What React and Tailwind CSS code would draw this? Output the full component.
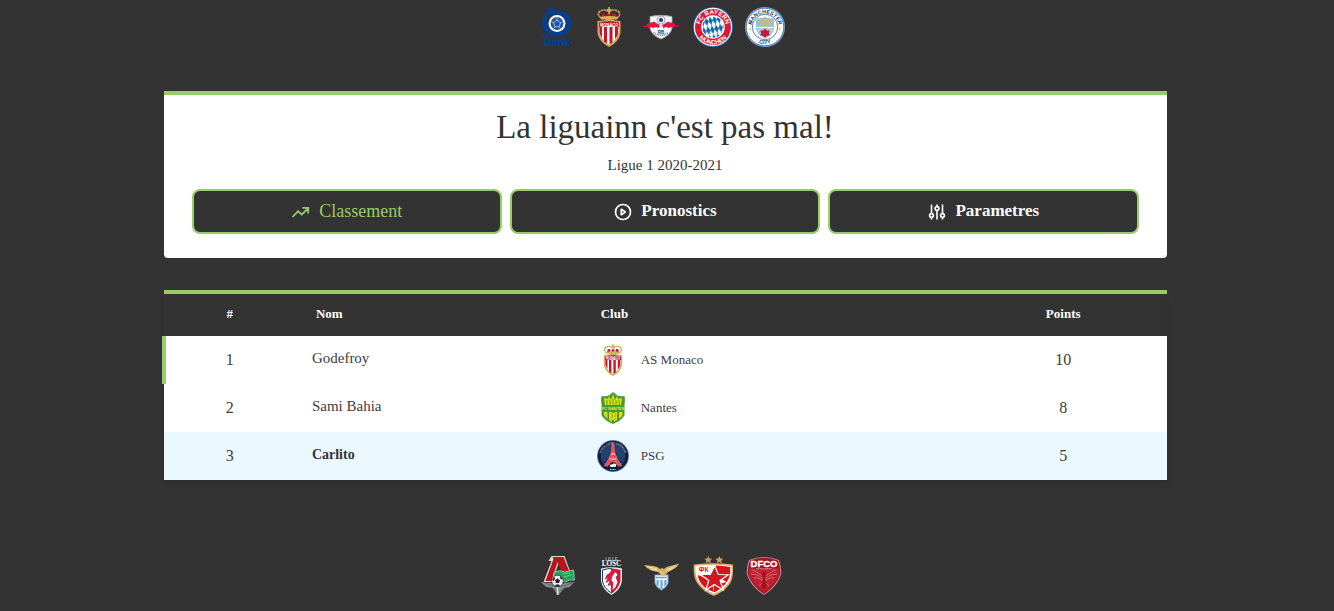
import React from "react";

const crestText = { fontFamily: '"Liberation Sans", Arial, sans-serif', fontWeight: 700 };

function Genk({ className }) {
  return (
    <svg viewBox="0 0 40 40" className={className} role="img" aria-label="Genk">
      <g fill="#063f8c">
        <path d="M10 1 L14 0 L18 4 C24 2 31 6 34.500 12 L27 23 C29 19 28 12 24 9 C20 6 15 7 13 10 Z" />
        <path d="M8 6 L13 4 C10 9 9 15 12 20 C15 25 21 26 26 23 L35 13 C35 20 31 27 25 29 C18 31 10 28 6 22 C4 17 5 11 8 6 Z" />
        <path d="M5 28.500 h6 v2 h-6z" />
      </g>
      <circle cx="20" cy="16.500" r="8.500" fill="#fff" />
      <circle cx="20" cy="16.500" r="6.500" fill="#24579d" />
      <path d="M20 13 l3.500 2.700 -1.400 4 h-4.200 L16.500 15.700z M20 10.500 v2.500 M23.500 15.700 l2.400 -1 M22 19.700 l1.500 2 M18 19.700 l-1.500 2 M16.500 15.700 l-2.400 -1" fill="none" stroke="#b9cbe2" strokeWidth=".8" />
      <text x="20" y="39" textAnchor="middle" fontSize="10.500" fill="#063f8c" stroke="#063f8c" strokeWidth=".6" style={crestText}>Genk</text>
    </svg>
  );
}

function Monaco({ className }) {
  return (
    <svg viewBox="0 0 40 40" className={className} role="img" aria-label="AS Monaco">
      <path d="M12 11 Q8 8 10 5 Q15 1 20 5 Q25 1 30 5 Q32 8 28 11" fill="none" stroke="#c99b45" strokeWidth="1.700" strokeDasharray="2.500 .5" />
      <path d="M19.300 0h1.600v2h1.600v1.400h-1.600V8h-1.600V3.400h-1.600V2h1.600z" fill="#d8b15d" />
      <path d="M13 7l3-1 1 4h-4zM27 7l-3-1-1 4h4zM18 7h4v3h-4z" fill="#c4142b" />
      <path d="M11 10 Q20 8 29 10 L28 12.500 H12Z" fill="#d8b15d" />
      <path d="M8.500 14 Q14 14 20 11.500 Q26 14 31.500 14 L31.500 26 Q30 35 20 40 Q10 35 8.500 26Z" fill="#d3ab58" />
      <path d="M10.500 16 H29.500 V26 Q28 33 20 37.500 Q12 33 10.500 26Z" fill="#fff" />
      <path d="M10.500 20h2.500v11q-2-3-2.500-5zM15 20h3v16.500l-3-2zM20.500 20h3v15.500l-3 1.800zM26 20h3v7q-1 3-3 5z" fill="#d20e2c" />
      <path d="M10 15.500 Q20 12.500 30 15.500 V20 Q20 18 10 20Z" fill="#bd1c32" />
      <text x="20" y="18.500" textAnchor="middle" fontSize="4" fill="#fff" style={crestText}>MONACO</text>
    </svg>
  );
}

function Leipzig({ className }) {
  return (
    <svg viewBox="0 0 40 40" className={className} role="img" aria-label="RB Leipzig">
      <path d="M9 9.500 Q20 7 31 9.500 L31 21 Q30 28 20 32 Q10 28 9 21Z" fill="#f4f5f7" stroke="#9aa5b1" strokeWidth=".8" />
      <circle cx="20" cy="13" r="4" fill="#fff" stroke="#788899" strokeWidth=".7" />
      <path d="M20 10.500l2.300 1.800-.9 2.600h-2.800l-.9-2.600z" fill="#30475d" />
      <path d="M0 18.500 L5 19 Q7 15 11 15.500 L13 14.500 L15 16 L19 18 L17.500 21 L15 20 L12 21 L9.500 20 L7 22 L7.500 20 L4 20Z" fill="#dd1742" />
      <path d="M40 18.500 L35 19 Q33 15 29 15.500 L27 14.500 L25 16 L21 18 L22.500 21 L25 20 L28 21 L30.500 20 L33 22 L32.500 20 L36 20Z" fill="#dd1742" />
      <text x="20" y="26.500" textAnchor="middle" fontSize="4.600" fill="#263d55" style={crestText}>RB</text>
      <path d="M12.500 25.500 Q20 31 27.500 25.500" stroke="#5c7187" strokeWidth="1.500" strokeDasharray="1 .8" fill="none" />
    </svg>
  );
}

function Bayern({ className }) {
  return (
    <svg viewBox="0 0 40 40" className={className} role="img" aria-label="FC Bayern München">
      <defs>
        <clipPath id="bayern-core"><circle cx="20" cy="20" r="10.800" /></clipPath>
        <pattern id="bayern-lozenges" width="4.200" height="9" patternUnits="userSpaceOnUse" patternTransform="rotate(-12 20 20)">
          <rect width="4.200" height="9" fill="#fff" />
          <path d="M2.100 0L4.200 4.500L2.100 9L0 4.500Z" fill="#0b69ac" />
        </pattern>
        <path id="bayern-top" d="M7 20 A13 13 0 0 1 33 20" />
        <path id="bayern-bottom" d="M2.600 20 A17.400 17.400 0 0 0 37.400 20" />
      </defs>
      <circle cx="20" cy="20" r="20" fill="#0870ae" />
      <circle cx="20" cy="20" r="19.200" fill="#fff" />
      <circle cx="20" cy="20" r="18" fill="#dc1837" />
      <circle cx="20" cy="20" r="11.800" fill="#fff" />
      <circle cx="20" cy="20" r="10.800" fill="url(#bayern-lozenges)" clipPath="url(#bayern-core)" />
      <text fontSize="6.200" fill="#fff" style={crestText}><textPath href="#bayern-top" startOffset="50%" textAnchor="middle">FC BAYERN</textPath></text>
      <text fontSize="6.200" fill="#fff" style={crestText}><textPath href="#bayern-bottom" startOffset="50%" textAnchor="middle">MÜNCHEN</textPath></text>
    </svg>
  );
}

function City({ className }) {
  return (
    <svg viewBox="0 0 40 40" className={className} role="img" aria-label="Manchester City">
      <defs>
        <path id="city-top" d="M6.500 20 A13.500 13.500 0 0 1 33.500 20" />
        <path id="city-bottom" d="M2.800 20 A17.200 17.200 0 0 0 37.200 20" />
      </defs>
      <circle cx="20" cy="20" r="20" fill="#78acd6" />
      <circle cx="20" cy="20" r="18.800" fill="#fff" stroke="#3c659a" strokeWidth=".8" />
      <circle cx="20" cy="20" r="12.700" fill="#fff" stroke="#3d6293" strokeWidth=".8" />
      <path d="M11 12 Q20 9 29 12 V21 Q28 28 20 31.500 Q12 28 11 21Z" fill="#8cc3e8" />
      <path d="M13 19.500h14l-1-3.500H14zM19.200 10h1.600v7h-1.600zM14.500 13h3v5h-3zM22.500 13h3v5h-3z" fill="#e3b652" />
      <path d="M11.500 20.500H28.500" stroke="#fff" strokeWidth="1.200" />
      <path d="M13 24l4-3M15 27l4-5M27 24l-4-3M25 27l-4-5" stroke="#c7e2f3" strokeWidth="1.200" />
      <path d="M20 21.500l1.700 2 2.800-.3-.6 2.700 1 2.400-2.700.5-2.200 1.800-2.200-1.800-2.700-.5 1-2.400-.6-2.700 2.800.3z" fill="#ca1737" />
      <circle cx="5.500" cy="22" r="1" fill="#d9b85c" />
      <circle cx="34.500" cy="22" r="1" fill="#d9b85c" />
      <text fontSize="5.400" fill="#17396d" style={crestText}><textPath href="#city-top" startOffset="50%" textAnchor="middle">MANCHESTER</textPath></text>
      <text fontSize="5.600" fill="#17396d" style={crestText}><textPath href="#city-bottom" startOffset="50%" textAnchor="middle">CITY</textPath></text>
    </svg>
  );
}

function Lokomotiv({ className }) {
  return (
    <svg viewBox="0 0 40 40" className={className} role="img" aria-label="Lokomotiv">
      <g transform="translate(1.500 0)">
        <path d="M13 0H26L34 22H26L20 7L14 26H5L13 5H10Z" fill="#d9d9d9" />
        <path d="M14 1H25L33 21H25L19 6L13 25H7L15 3Z" fill="#b9141b" />
        <path d="M2 26 L20 28 L36 26 L31 31 L26 32 L20 39 L14 32 L8 31Z" fill="#8b8f92" />
        <path d="M6 27L18 31M34 27L22 31M12 31l7 4M28 31l-7 4" stroke="#555" strokeWidth=".7" />
        <path d="M15 17 Q21 13 26 16 L35 14 L36 24 Q31 23 27 26 L17 24Z" fill="#26a35b" stroke="#bce0c8" strokeWidth=".7" />
        <path d="M24 18l7-1M25 21l8-2" stroke="#69c187" />
        <circle cx="19" cy="25" r="5.800" fill="#eceeee" stroke="#222" strokeWidth=".7" />
        <path d="M19 22.500l2.500 1.800-1 2.700h-3l-1-2.700zM13.700 24l2-3 1 1.500-1.500 2.500zM22 20l2.300 3-1.800.5-1-2zM17.500 28.500h3l1 1.500-2.500 1-2.500-1z" fill="#202323" />
        <path d="M19 31v8" stroke="#e4e5e5" strokeWidth="1.500" />
      </g>
    </svg>
  );
}

function Losc({ className }) {
  return (
    <svg viewBox="0 0 40 40" className={className} role="img" aria-label="LOSC Lille">
      <g transform="translate(2.500 0)">
        <text x="20" y="4.500" textAnchor="middle" fontSize="4.500" fill="#aab0bd" style={crestText}>LILLE</text>
        <text x="20" y="10" textAnchor="middle" fontSize="7.200" fill="#fff" style={{ fontFamily: '"Liberation Serif", serif', fontWeight: 700 }}>LOSC</text>
        <path d="M9.500 12.500 Q20 10 30.500 12.500 V25 Q29 34 20 39 Q11 34 9.500 25Z" fill="#e8e9ed" />
        <path d="M11 14 Q16 12.500 20 12.500 V37 Q12 32 11 25Z" fill="#fff" stroke="#22375f" />
        <path d="M20 12.500 Q25 12.500 29 14 V25 Q27 33 20 37.500Z" fill="#c61b3b" />
        <path d="M20 14l-2 3-3 2-2 5 3-2-2 5 4-2-2 5 4-1v6l3-5 1-6 3-3-3-3 2-4z" fill="#d61e43" />
        <path d="M21 20l3-4 2 3-2 2 2 5-2 5-3 3 1-7-2-3z" fill="#fff" />
      </g>
    </svg>
  );
}

function Lazio({ className }) {
  return (
    <svg viewBox="0 0 40 40" className={className} role="img" aria-label="Lazio">
      <path d="M14 19H27V27Q26 31 20.500 34Q15 31 14 27Z" fill="#eef8fc" stroke="#74acd2" />
      <path d="M15.500 24h2.200v7l-2.200-2.500zM19.400 24h2.200v9h-2.200zM23.300 24h2.200v4.500l-2.200 2.500z" fill="#69aad9" />
      <path d="M15 21.500h11" stroke="#557e9a" strokeWidth="1.500" strokeDasharray="1.500 .6" />
      <path d="M3 9 C9 10 15 9 19 13 L21 12 L23 13 C27 9 33 10 38 7.500 C36 12 31 14 27 16 L24 19.500 L20 19 L17 16 C10 15 5 12 3 9Z" fill="#d5b266" />
      <path d="M6 10.500l10 2.500M9 13l8 1.500M35 10l-9 3.500M32 12.500l-7 2.500M19 15l4 3" stroke="#fff0bc" strokeWidth=".8" />
    </svg>
  );
}

function RedStar({ className }) {
  return (
    <svg viewBox="0 0 40 40" className={className} role="img" aria-label="Crvena Zvezda">
      <g transform="translate(.8 0)">
        <path d="M14.500 0l1.200 2.500 2.800.2-2.100 1.800.7 2.800-2.600-1.500-2.500 1.500.6-2.800-2.100-1.800 2.800-.2zM25.500 0l1.200 2.500 2.800.2-2.100 1.800.7 2.800-2.600-1.500-2.500 1.500.6-2.800-2.100-1.800 2.800-.2z" fill="#cea15b" />
        <path d="M0 8.500Q20 6 39.200 8.500Q40 22 36 28Q30 36 20 40Q10 36 4 28Q-1 22 0 8.500Z" fill="#d8aa66" />
        <path d="M1.500 10Q20 7.500 37.800 10Q38.500 21 34.500 27Q29 34 20 38Q11 34 5.500 27Q1 21 1.500 10Z" fill="#fff" />
        <path d="M22 9.500Q30 9.500 36.500 11Q37 21 33 26L22 20zM4 19L18 24L20 36Q11 33 7 27Q4 23 4 19ZM33 26Q28 33 20 36.500L20 29z" fill="#d4151d" />
        <path d="M21 10l3.500 8.500 10 .2-8.200 5.800 3.200 9.500-9-5.500-8.500 5.500 3-9.500-8.500-6 10-.2z" fill="#d4151d" stroke="#fff" strokeWidth="1.200" />
        <text x="9.800" y="16" textAnchor="middle" fontSize="6.500" fill="#d4151d" style={crestText}>ФК</text>
      </g>
    </svg>
  );
}

function Dijon({ className }) {
  return (
    <svg viewBox="0 0 40 40" className={className} role="img" aria-label="DFCO">
      <g transform="translate(-1 0)">
        <path d="M5 4Q20 -2 35 4Q38 12 37 19Q33 31 20 39Q7 31 3 19Q2 12 5 4Z" fill="#c98c92" />
        <path d="M6 4.500Q20 -1 34 4.500Q37 12 36 19Q32 30 20 38Q8 30 4 19Q3 12 6 4.500Z" fill="#a81322" />
        <path d="M5 12.500Q20 11 35 12.500V19Q30 30 20 36Q10 30 5 19Z" fill="#bd2230" />
        <path d="M8 14Q17 17 20 23Q23 17 32 14M7 18Q17 18 20 26Q23 18 33 18M10 22Q18 20 20 30Q22 20 30 22M15 30l5-5 5 5" fill="none" stroke="#d36a73" strokeWidth="1" />
        <path d="M18 18l2-3 2 3-1 5 2 7-3 4-3-4 2-7z" fill="#a5101f" />
        <path d="M12 12.800h16" stroke="#dca0a6" strokeWidth="1" strokeDasharray="1.200 .6" />
        <text x="20" y="10.800" textAnchor="middle" fontSize="9.500" fill="#fff" stroke="#fff" strokeWidth=".3" style={crestText}>DFCO</text>
      </g>
    </svg>
  );
}

function Nantes({ className }) {
  return (
    <svg viewBox="0 0 32 32" className={className} role="img" aria-label="Nantes">
      <path d="M4.500 4q5 1 8-1l3.500-3 3.500 3q3 2 8 1l.5 4-.5 4v11q-2 5-11.500 9Q6.500 28 4.500 23V12L4 8Z" fill="#449b37" />
      <path d="M7 6l4 1 1-3 2 4 2-6 2 6 2-4 1 3 4-1-1 7H8ZM6.500 20h4v7l-3-3zM12 20h3v10l-3-2zM17 20h3v8l-3 2zM22 20h3.500v3q-1 2-3.500 4z" fill="#e3dc0c" />
      <path d="M10 8v5M13 8v5M16 7v6M19 8v5M22 8v5" stroke="#57a431" />
      <path d="M5 14H27V19H5Z" fill="#42a039" />
      <text x="16" y="18" textAnchor="middle" fontSize="4" fill="#e6e527" style={crestText}>FC NANTES</text>
      <path d="M14 22l3-2 2 2-2 2 2 2-3 3-2-3 2-2z" fill="#f4df00" stroke="#398c35" strokeWidth=".5" />
    </svg>
  );
}

function Psg({ className }) {
  return (
    <svg viewBox="0 0 32 32" className={className} role="img" aria-label="PSG">
      <defs><path id="psg-top" d="M4 16 A12 12 0 0 1 28 16" /></defs>
      <circle cx="16" cy="16" r="16" fill="#7385a3" />
      <circle cx="16" cy="16" r="15.200" fill="#0f1f42" />
      <circle cx="16" cy="16" r="11.600" fill="#142a55" stroke="#5a6e90" strokeWidth=".5" />
      <path d="M5 19A11.300 11.300 0 0 1 10 7L14 5 12 17 6 24ZM27 19A11.300 11.300 0 0 0 22 7L18 5 20 17 26 24Z" fill="#24426f" />
      <path d="M15 4h2l1 9 2.500 6 4.500 7h-4l-3-4h-4l-3 4H7l4.500-7 2.500-6Z" fill="#ee4a57" stroke="#f0a5ad" strokeWidth=".4" />
      <path d="M14 14h4M12.500 19h7" stroke="#fff" strokeWidth=".8" />
      <path d="M11 26Q16 19 21 26L20 29H12Z" fill="#0f1f42" />
      <path d="M12.500 24.500q3 .5 4-1l3 .5-1 3h-5z" fill="#fff" />
      <path d="M13 29.500h6" stroke="#d0d8e6" strokeWidth="1.200" strokeDasharray="1 .5" />
      <text fontSize="2.800" fill="#aab6ca" style={crestText}><textPath href="#psg-top" startOffset="50%" textAnchor="middle">PARIS SAINT-GERMAIN</textPath></text>
    </svg>
  );
}

function Trending({ className }) {
  return (
    <svg viewBox="0 0 20 20" className={className} fill="none" stroke="currentColor" strokeWidth="1.800" aria-hidden="true">
      <path d="M1.500 15L7 9.300L10.800 12.500L17 6.500M11.500 5.800H17.200V11.500" />
    </svg>
  );
}

function Play({ className }) {
  return (
    <svg viewBox="0 0 20 20" className={className} fill="none" stroke="currentColor" strokeWidth="1.700" aria-hidden="true">
      <circle cx="10" cy="10" r="7.500" />
      <path d="M8.300 7.300L12.300 10L8.300 12.700Z" strokeLinejoin="round" />
    </svg>
  );
}

function Sliders({ className }) {
  return (
    <svg viewBox="0 0 20 20" className={className} fill="none" stroke="currentColor" strokeWidth="1.600" aria-hidden="true">
      <path d="M4.500 2.500v9M4.500 15.500v2M10 2.500v2M10 8.500v9M15.500 2.500v9M15.500 15.500v2" />
      <circle cx="4.500" cy="13.500" r="1.900" />
      <circle cx="10" cy="6.500" r="1.900" />
      <circle cx="15.500" cy="13.500" r="1.900" />
    </svg>
  );
}

const tabs = [
  { label: "Classement", Icon: Trending, active: true },
  { label: "Pronostics", Icon: Play },
  { label: "Parametres", Icon: Sliders },
];

const standings = [
  { rank: 1, name: "Godefroy", club: "AS Monaco", Crest: Monaco, points: 10, leader: true },
  { rank: 2, name: "Sami Bahia", club: "Nantes", Crest: Nantes, points: 8 },
  { rank: 3, name: "Carlito", club: "PSG", Crest: Psg, points: 5, me: true },
];

function CrestRow({ crests }) {
  return (
    <div className="flex justify-center gap-3 pr-2">
      {crests.map((Crest, i) => (
        <Crest key={i} className="size-10 shrink-0" />
      ))}
    </div>
  );
}

export default function App() {
  return (
    <div className="min-h-screen bg-[#333333] pt-[7px] pr-1 pb-[15px] font-['Liberation_Serif',serif] text-[#333333]">
      <header>
        <CrestRow crests={[Genk, Monaco, Leipzig, Bayern, City]} />
      </header>

      <main className="mx-auto mt-11 w-full max-w-[1003px]">
        <section className="rounded-b border-t-4 border-[#99cc66] bg-white px-7 pt-3.5 pb-6 text-center">
          <h1 className="text-[33px] leading-9">La liguainn c'est pas mal!</h1>
          <p className="mt-2.5 text-[15px] leading-5">Ligue 1 2020-2021</p>
          <nav className="mt-3.5 grid grid-cols-3 gap-2">
            {tabs.map(({ label, Icon, active }) => (
              <button
                key={label}
                type="button"
                className={
                  active
                    ? "flex h-[45px] items-center justify-center gap-2 rounded-lg border-2 border-[#99cc66] bg-[#333333] text-[18px] text-[#99cc66]"
                    : "flex h-[45px] items-center justify-center gap-2 rounded-lg border-2 border-[#99cc66] bg-[#333333] text-[17px] font-bold text-white"
                }
              >
                <Icon className="size-5" />
                <span className="pb-0.5 leading-6">{label}</span>
              </button>
            ))}
          </nav>
        </section>

        <section className="mt-8 border-t-4 border-[#99cc66] shadow-md">
          <table className="w-full table-fixed border-separate border-spacing-0 bg-white">
            <thead>
              <tr className="h-[42px] bg-[#333333] text-[13px] leading-4 text-white">
                <th scope="col" className="w-[13.2%] p-0 pb-0.5 text-center">#</th>
                <th scope="col" className="w-[28.4%] px-5 pt-0 pb-0.5 text-left">Nom</th>
                <th scope="col" className="px-5 pt-0 pb-0.5 text-left">Club</th>
                <th scope="col" className="w-[20.6%] p-0 pb-0.5 text-center">Points</th>
              </tr>
            </thead>
            <tbody className="text-[#3d3d3d]">
              {standings.map(({ rank, name, club, Crest, points, leader, me }) => (
                <tr key={rank} className={me ? "h-12 bg-[#ebf8ff]" : "h-12"}>
                  <td className="relative p-0 text-center text-[16px] leading-6">
                    {leader && <span className="absolute inset-y-0 -left-0.5 w-1 bg-[#99cc66]" />}
                    {rank}
                  </td>
                  <td className="px-4 pt-0 pb-1 text-[15px] leading-5">
                    <span className={me ? "text-[14px] font-bold text-[#333333]" : ""}>{name}</span>
                  </td>
                  <td className="px-4 py-0">
                    <div className="flex items-center gap-3">
                      <Crest className="size-8 shrink-0" />
                      <span className="text-[13px] leading-4">{club}</span>
                    </div>
                  </td>
                  <td className="p-0 text-center text-[16px] leading-6">{points}</td>
                </tr>
              ))}
            </tbody>
          </table>
        </section>
      </main>

      <footer className="mt-[76px]">
        <CrestRow crests={[Lokomotiv, Losc, Lazio, RedStar, Dijon]} />
      </footer>
    </div>
  );
}
